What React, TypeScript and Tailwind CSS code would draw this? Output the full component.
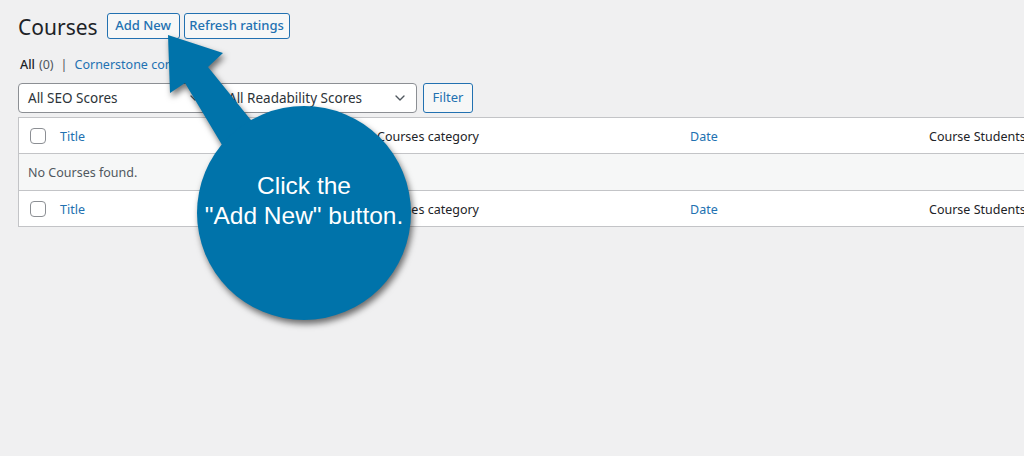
import { ChevronDown } from "lucide-react";

const wp = { fontFamily: '"Noto Sans", "Open Sans", sans-serif' };

function Checkbox() {
  return <span className="block w-4 h-4 rounded-[4px] border border-[#8c8f94] bg-white" />;
}

function HeaderRow({ top }: { top?: boolean }) {
  return (
    <div
      className={`grid grid-cols-[33px_317px_313px_239px_1fr] h-[36px] items-center bg-white ${
        top ? "border-b border-[#c3c4c7]" : "border-t border-[#c3c4c7]"
      }`}
    >
      <div className="flex justify-end pr-[6px] pt-[1px]">
        <Checkbox />
      </div>
      <div className="px-2 pt-[3px] text-[#2271b1]">Title</div>
      <div className="px-2 pt-[3px] text-[#1d2327]">Courses category</div>
      <div className="px-2 pt-[3px] text-[#2271b1]">Date</div>
      <div className="px-2 pt-[3px] text-[#1d2327] whitespace-nowrap">Course Students</div>
    </div>
  );
}

function Select({ label, className }: { label: string; className: string }) {
  return (
    <div
      className={`h-[30px] flex items-center justify-between pl-[9px] pr-[8px] bg-white border border-[#8c8f94] rounded-[4px] text-[13.5px] text-[#2c3338] ${className}`}
    >
      <span>{label}</span>
      <ChevronDown className="w-4 h-4 text-[#50575e]" strokeWidth={2} />
    </div>
  );
}

function Callout() {
  return (
    <svg
      className="absolute left-0 top-0 pointer-events-none"
      width="1024"
      height="456"
      viewBox="0 0 1024 456"
      style={{ filter: "drop-shadow(2px 4px 3px rgba(0,0,0,0.55))" }}
    >
      <polygon
        points="168,35 223,53 208,67 275,150 240,175 185,83 170,93"
        fill="#0073aa"
      />
      <circle cx="304" cy="213" r="107" fill="#0073aa" />
    </svg>
  );
}

export default function App() {
  return (
    <div className="relative w-[1024px] h-[456px] overflow-hidden bg-[#f0f0f1] text-[12.5px]" style={wp}>
      <div className="pl-[18px] pt-[13px]">
        <div className="flex items-center gap-[4px] h-[26px]">
          <h1 className="text-[21px] text-[#1d2327] leading-none mr-[5px] pt-[2px]">Courses</h1>
          <button className="h-[26px] w-[73px] border border-[#2271b1] rounded-[3px] bg-[#f6f7f7] text-[#2271b1] text-[13px] font-medium">
            Add New
          </button>
          <button className="h-[26px] w-[106px] border border-[#2271b1] rounded-[3px] bg-[#f6f7f7] text-[#2271b1] text-[13px] font-medium">
            Refresh ratings
          </button>
        </div>

        <div className="mt-[17px] pl-[2px] h-[18px] flex items-center text-[12.5px] text-[#50575e]">
          <span className="text-[#1d2327] font-medium">All</span>
          <span className="ml-[4px]">(0)</span>
          <span className="mx-[7px] text-[#50575e]">|</span>
          <span className="text-[#2271b1]">Cornerstone content</span>
        </div>

        <div className="mt-[9px] flex items-center">
          <Select label="All SEO Scores" className="w-[194px]" />
          <Select label="All Readability Scores" className="w-[199px] ml-[6px]" />
          <button className="ml-[6px] h-[30px] w-[50px] border border-[#2271b1] rounded-[3px] bg-[#f6f7f7] text-[#2271b1] text-[13px]">
            Filter
          </button>
        </div>

        <div className="mt-[4px] w-[1040px] border border-[#c3c4c7] bg-white text-[12.5px]">
          <HeaderRow top />
          <div className="h-[36px] flex items-center pl-[9px] pt-[3px] bg-[#f6f7f7] text-[#50575e]">No Courses found.</div>
          <HeaderRow />
        </div>
      </div>

      <Callout />
      <div
        className="absolute left-[194px] top-[171px] w-[220px] text-center text-white text-[24.5px] leading-[30px]"
        style={{ fontFamily: '"Liberation Sans", Arial, sans-serif' }}
      >
        <div>Click the</div>
        <div>"Add New" button.</div>
      </div>
    </div>
  );
}
